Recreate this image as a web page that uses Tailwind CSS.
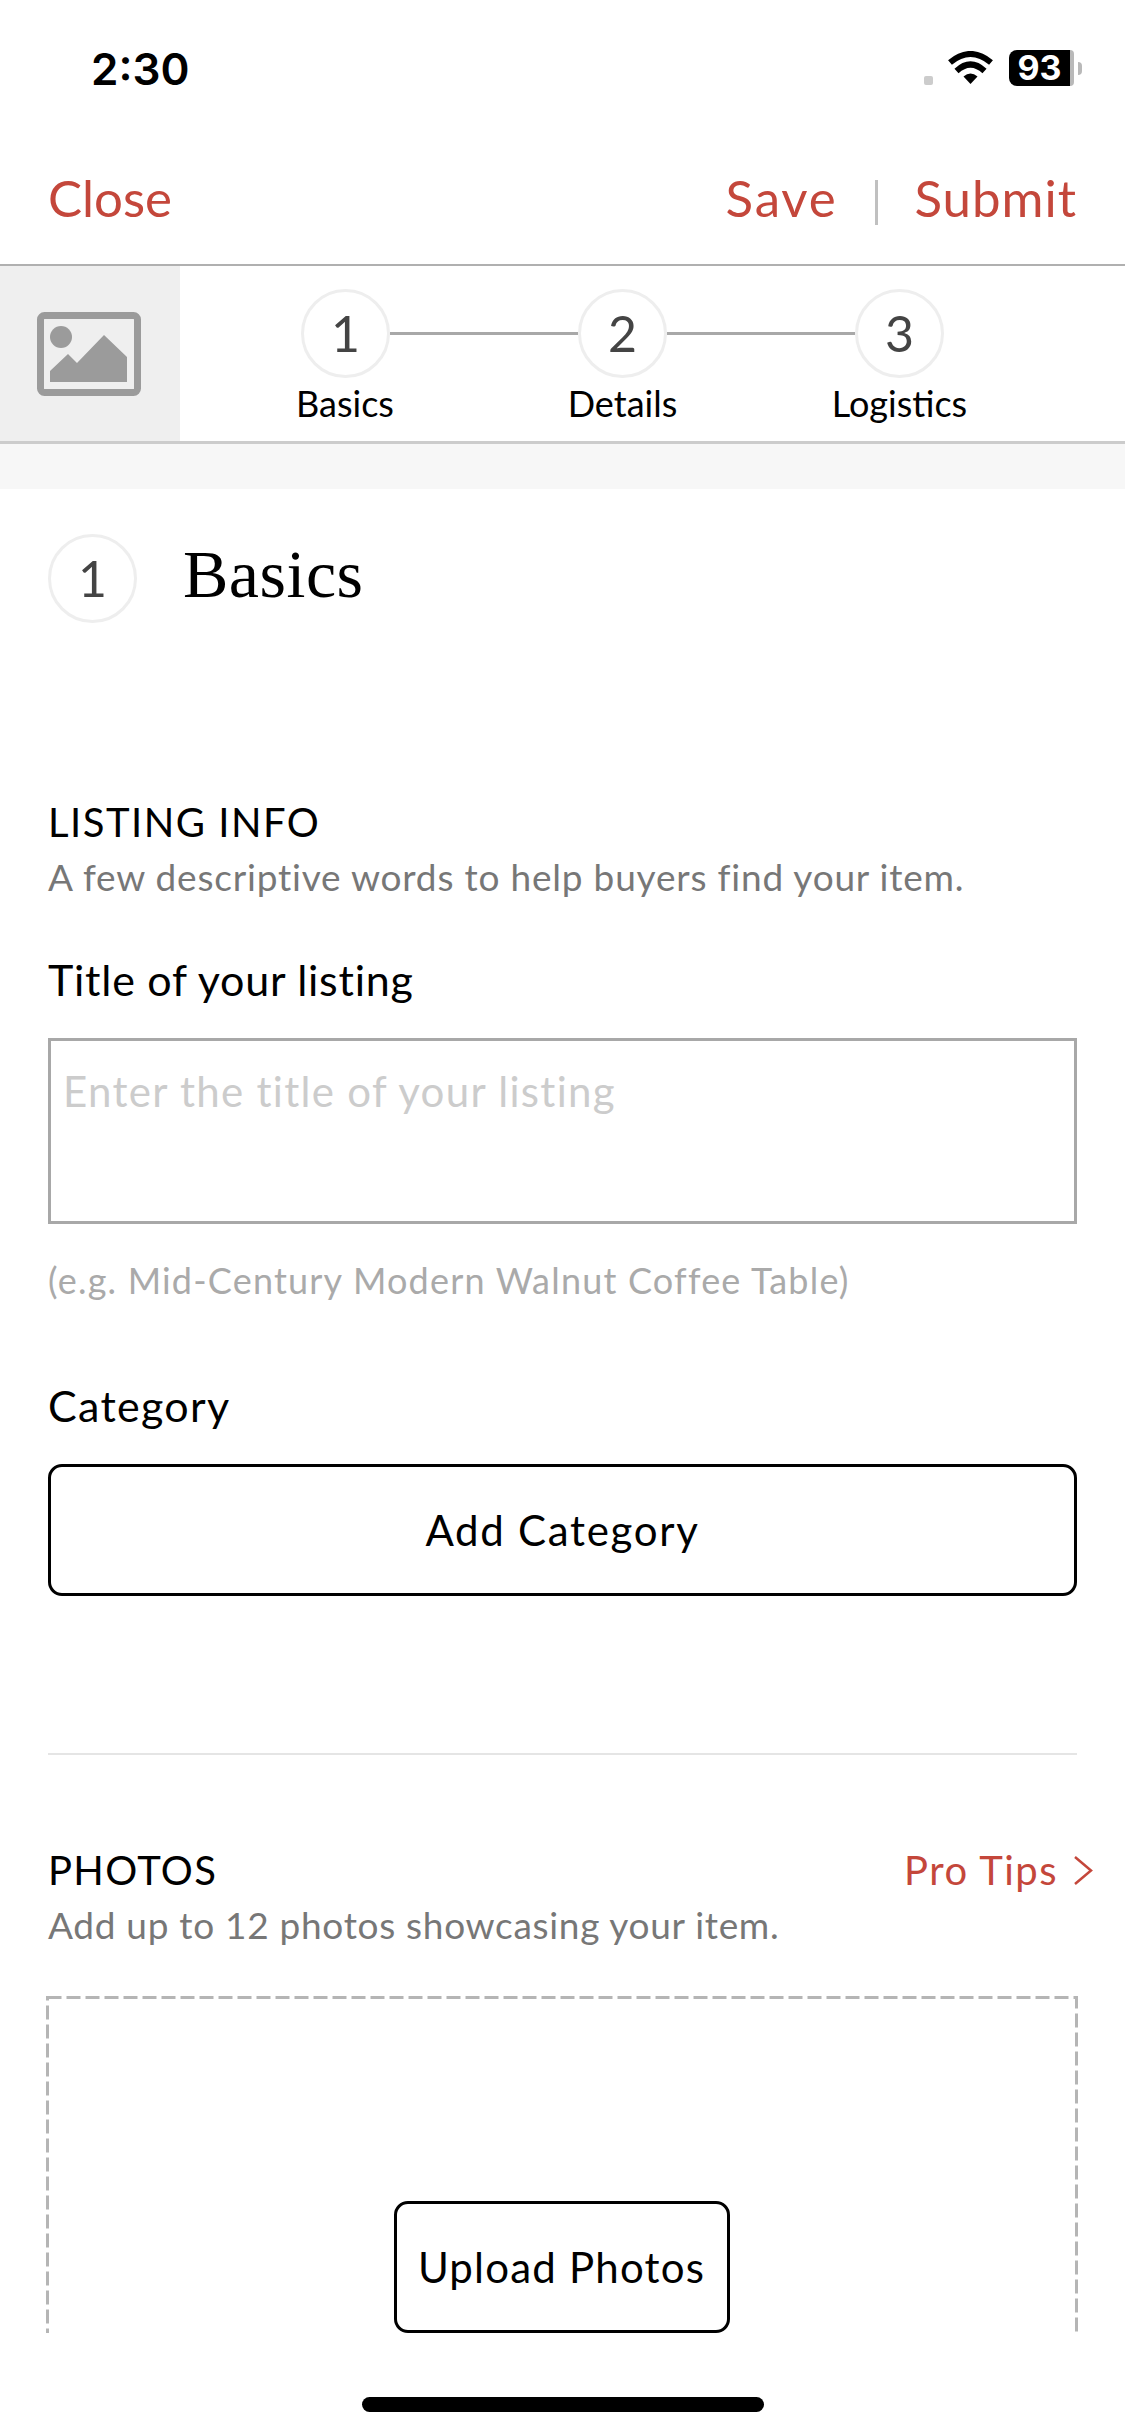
<!DOCTYPE html>
<html lang="en">
<head>
<meta charset="utf-8">
<title>Listing – Basics</title>
<script src="https://cdn.jsdelivr.net/npm/@tailwindcss/browser@4"></script>
</head>
<body class="bg-white">
<div class="relative w-[1125px] h-[2436px] overflow-hidden bg-white font-['Lato',sans-serif] text-black">

  <!-- Status bar -->
  <div class="h-[113px] pl-[91px] pr-[43px] pt-[46px] flex justify-between items-start">
    <span class="font-['Inter',sans-serif] font-semibold text-[44px] leading-[46px]">2:30</span>
    <div class="flex items-start pt-[5px]">
      <span class="w-[9px] h-[9px] mt-[25px] rounded-[2px] bg-[#cccccc]"></span>
      <svg class="ml-[15px]" width="45" height="33" viewBox="0 0 45 33">
        <path d="M22.5 33 L15.5 25.5 Q22.5 19.5 29.5 25.5 Z" fill="#000"/>
        <path d="M8.5 20 Q22.5 7 36.5 20" fill="none" stroke="#000" stroke-width="6"/>
        <path d="M2 11.5 Q22.5 -5.5 43 11.5" fill="none" stroke="#000" stroke-width="6"/>
      </svg>
      <div class="ml-[16px] -mt-[1px] w-[65px] h-[36px] flex">
        <span class="flex-1 rounded-l-[8px] text-center text-white bg-black font-['Inter',sans-serif] font-bold text-[34px] leading-[36px]">93</span>
        <span class="w-[4px] rounded-r-[4px] bg-[#b9b9b9]"></span>
      </div>
      <span class="ml-[4px] mt-[11px] w-[4px] h-[13px] rounded-r-[4px] bg-[#b9b9b9]"></span>
    </div>
  </div>

  <!-- Action bar -->
  <div class="h-[153px] px-[48px] pt-[55px] flex justify-between items-start border-b-2 border-[#b0b0b0] text-[#c4473b] text-[51px] leading-[60px]">
    <span>Close</span>
    <div class="flex items-start tracking-[1px]">
      <span class="tracking-[1.8px]">Save</span>
      <span class="ml-[38px] mt-[12px] w-[3px] h-[45px] bg-[#c0c0c0]"></span>
      <span class="ml-[36px]">Submit</span>
    </div>
  </div>

  <!-- Stepper -->
  <div class="h-[178px] flex border-b-[3px] border-[#cccccc]">
    <div class="w-[180px] bg-[#efefef] pl-[37px] pt-[46px] shrink-0">
      <svg width="104" height="85" viewBox="0 0 104 85">
        <rect x="3.5" y="3.5" width="97" height="77" rx="4" fill="none" stroke="#9b9b9b" stroke-width="7"/>
        <circle cx="24" cy="25" r="11" fill="#9b9b9b"/>
        <path d="M13 70 L13 59 L31 42 L40 51 L67 23 L90 45 L90 70 Z" fill="#9b9b9b"/>
      </svg>
    </div>
    <div class="pt-[23px]">
      <div class="flex items-center pl-[121px]">
        <span class="w-[89px] h-[89px] rounded-full border-[3px] border-[#eeeeee] flex items-center justify-center text-[50px] text-[#444444]">1</span>
        <span class="w-[188px] h-[3px] bg-[#a8a8a8]"></span>
        <span class="w-[89px] h-[89px] rounded-full border-[3px] border-[#eeeeee] flex items-center justify-center text-[50px] text-[#444444]">2</span>
        <span class="w-[188px] h-[3px] bg-[#a8a8a8]"></span>
        <span class="w-[89px] h-[89px] rounded-full border-[3px] border-[#eeeeee] flex items-center justify-center text-[50px] text-[#444444]">3</span>
      </div>
      <div class="flex pl-[26px] mt-[3px] text-[36px] leading-[44px]">
        <span class="w-[278px] text-center">Basics</span>
        <span class="w-[277px] text-center">Details</span>
        <span class="w-[277px] text-center">Logistics</span>
      </div>
    </div>
  </div>

  <!-- Grey band -->
  <div class="h-[45px] bg-[#f7f7f7]"></div>

  <!-- Form content, cut off above the home indicator -->
  <div class="h-[1844px] overflow-hidden px-[48px]">
    <div class="pt-[45px] flex items-center h-[134px]">
      <span class="w-[89px] h-[89px] rounded-full border-[3px] border-[#eeeeee] flex items-center justify-center text-[50px] text-[#444444]">1</span>
      <h1 class="ml-[46px] -mt-[10px] font-['Liberation_Serif',serif] text-[68px] tracking-[0.5px] leading-[70px]">Basics</h1>
    </div>

    <h2 class="mt-[174px] text-[40px] tracking-[1.5px] leading-[50px]">LISTING INFO</h2>
    <p class="mt-[8px] text-[37px] tracking-[0.8px] leading-[44px] text-[#777777]">A few descriptive words to help buyers find your item.</p>

    <label class="block mt-[56px] text-[43px] tracking-[0.75px] leading-[50px]">Title of your listing</label>
    <div class="mt-[33px] h-[186px] border-[3px] border-[#a8a8a8] pl-[12px] pt-[25px] text-[42px] tracking-[1.3px] leading-[50px] text-[#cccccc]">Enter the title of your listing</div>
    <p class="mt-[33px] text-[36px] tracking-[1.2px] leading-[46px] text-[#aaaaaa]">(e.g. Mid-Century Modern Walnut Coffee Table)</p>

    <label class="block mt-[78px] text-[43px] tracking-[1.3px] leading-[50px]">Category</label>
    <div class="mt-[33px] h-[132px] border-[3px] border-black rounded-[14px] flex items-center justify-center text-[42px] tracking-[1.7px]">Add Category</div>

    <div class="mt-[157px] h-[2px] bg-[#e5e5e5]"></div>

    <div class="mt-[90px] flex justify-between items-start">
      <h2 class="text-[40px] tracking-[1.3px] leading-[50px]">PHOTOS</h2>
      <div class="flex items-center text-[#c4473b] text-[40px] tracking-[1.5px] leading-[50px] -mr-[17px]">
        <span>Pro Tips</span>
        <svg class="ml-[15px]" width="21" height="31" viewBox="0 0 21 31"><path d="M2 2 L18 15.5 L2 29" fill="none" stroke="#c4473b" stroke-width="2.5"/></svg>
      </div>
    </div>
    <p class="mt-[8px] text-[37px] tracking-[0.7px] leading-[44px] text-[#777777]">Add up to 12 photos showcasing your item.</p>

    <div class="relative mt-[49px] -ml-[2px] h-[600px] pt-[205px]">
      <svg class="absolute left-0 top-0" width="1032" height="600" viewBox="0 0 1032 600">
        <rect x="1.5" y="1.5" width="1029" height="597" fill="none" stroke="#b5b5b5" stroke-width="3" stroke-dasharray="14 5"/>
      </svg>
      <div class="mx-auto w-[336px] h-[132px] border-[3px] border-black rounded-[14px] flex items-center justify-center text-[42px] tracking-[1.2px]">Upload Photos</div>
    </div>
  </div>

  <!-- Home indicator -->
  <div class="absolute left-[362px] top-[2397px] w-[402px] h-[15px] rounded-full bg-black"></div>
</div>
</body>
</html>
